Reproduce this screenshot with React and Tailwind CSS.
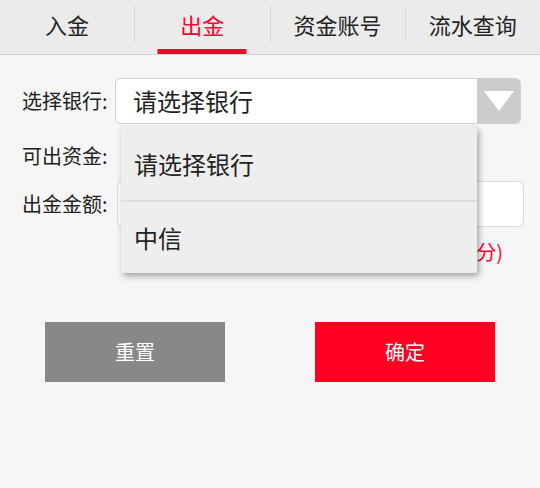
import React from "react";

const tabs = ["入金", "出金", "资金账号", "流水查询"];

const App = () => {
  const active = 1;

  return (
    <div
      className="relative w-[540px] h-[488px] bg-[#f6f6f6] overflow-hidden text-[#222]"
      style={{ fontFamily: '"Noto Sans CJK SC", "Noto Sans", sans-serif' }}
    >
      {/* tab bar */}
      <div className="flex h-[55px] bg-[#ebebeb] border-b border-[#d3d3d3]">
        {tabs.map((t, i) => (
          <React.Fragment key={t}>
            {i > 0 && <div className="w-px h-[36px] mt-[6px] bg-[#d6d6d6]" />}
            <div
              className={
                "relative flex-1 flex items-center justify-center pb-[6px] text-[22px] " +
                (i === active ? "text-[#ff0030]" : "text-[#222]")
              }
            >
              {t}
              {i === active && (
                <span className="absolute bottom-0 left-1/2 -translate-x-1/2 w-[89px] h-[5px] bg-[#ff0030]" />
              )}
            </div>
          </React.Fragment>
        ))}
      </div>

      {/* form */}
      <div className="pl-[22px]">
        <div className="flex items-center mt-[23px] h-[46px]">
          <span className="w-[93px] text-[20px] leading-none">选择银行:</span>
          <div className="flex w-[406px] h-[46px] rounded-[5px] border border-[#d0d0d0] bg-white overflow-hidden">
            <div className="flex-1 flex items-center pl-[17px] text-[24px] leading-none">
              请选择银行
            </div>
            <div className="w-[43px] h-full bg-[#cccccc] flex items-center justify-center">
              <svg width="30" height="20" viewBox="0 0 30 20">
                <polygon points="0,0 30,0 15,20" fill="#ffffff" />
              </svg>
            </div>
          </div>
        </div>

        <div className="flex items-center mt-[17px] h-[30px]">
          <span className="w-[93px] text-[20px] leading-none">可出资金:</span>
        </div>

        <div className="flex items-center mt-[10px] h-[46px]">
          <span className="w-[95px] text-[20px] leading-none">出金金额:</span>
          <div className="w-[407px] h-[46px] rounded-[6px] border border-[#dcdcdc] bg-white" />
        </div>

        <div className="mt-[12px] h-[26px] flex items-center justify-end pr-[37px] text-[20px] leading-none text-[#ff0030]">
          (单位：元，精确到分)
        </div>
      </div>

      {/* buttons */}
      <div className="flex gap-[90px] pl-[45px] mt-[57px]">
        <button className="w-[180px] h-[60px] bg-[#888888] text-white text-[20px]">
          重置
        </button>
        <button className="w-[180px] h-[60px] bg-[#ff0020] text-white text-[20px]">
          确定
        </button>
      </div>

      {/* open select list */}
      <div className="absolute left-[121px] top-[127px] w-[356px] bg-[#eeeeee] rounded-[2px] shadow-[2px_3px_6px_rgba(0,0,0,0.35)]">
        <div className="h-[73px] flex items-center pl-[13px] text-[24px] leading-none">
          请选择银行
        </div>
        <div className="h-[2px] bg-[#dedede]" />
        <div className="h-[71px] flex items-center pl-[13px] text-[24px] leading-none">
          中信
        </div>
      </div>
    </div>
  );
};

export default App;
